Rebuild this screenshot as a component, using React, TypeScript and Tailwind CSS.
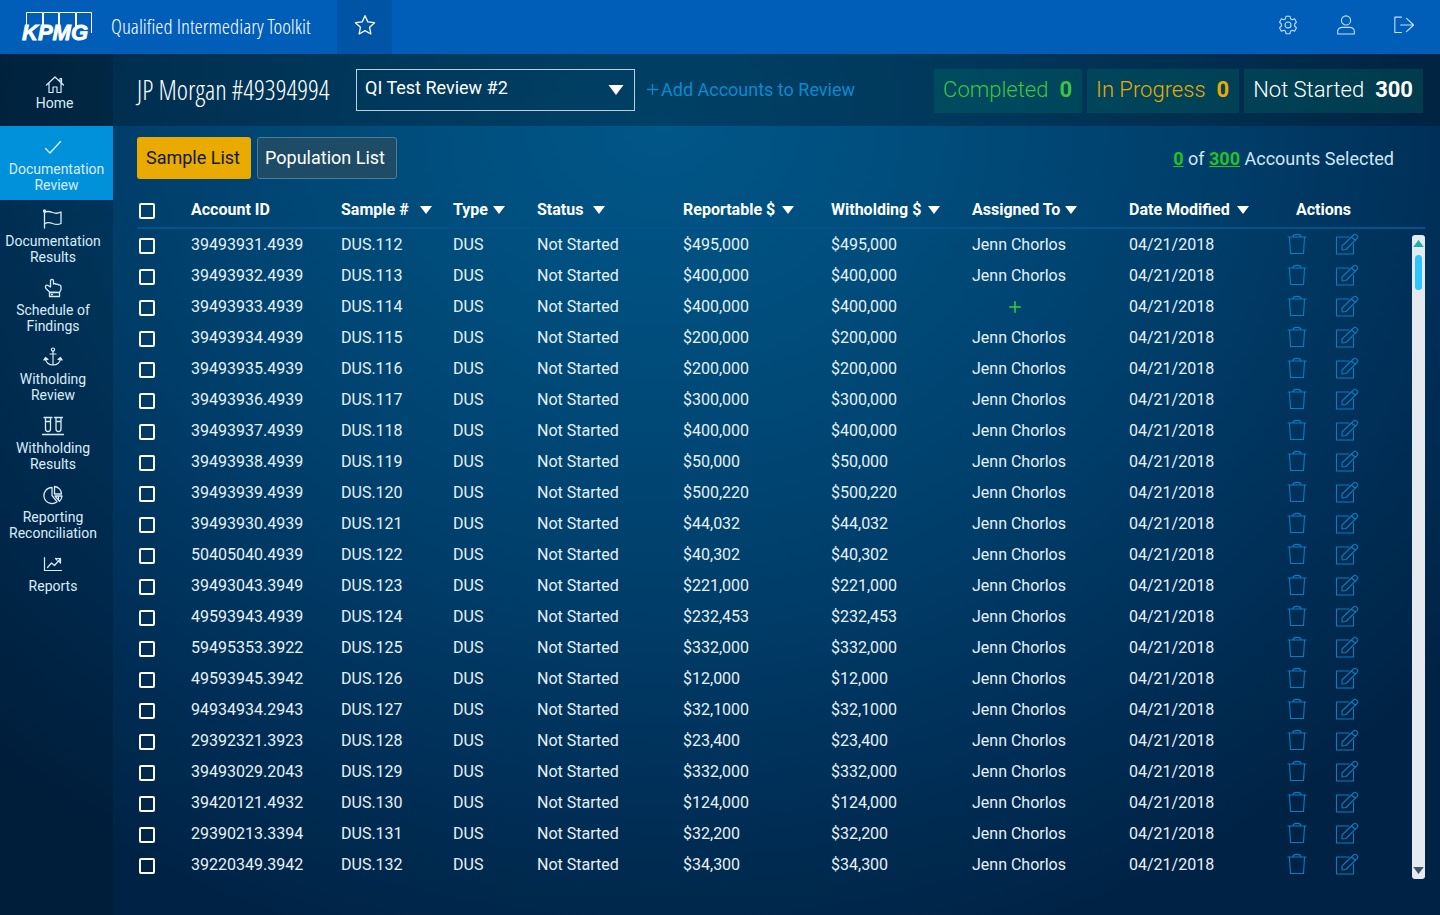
import React from "react";
import { FiPlus } from "react-icons/fi";

const stroke = { fill: "none", stroke: "currentColor", strokeLinecap: "round", strokeLinejoin: "round" } as const;

type IconProps = { className?: string };

const HomeIcon = ({ className }: IconProps) => (
  <svg viewBox="0 0 20 20" className={className} {...stroke} strokeWidth={1.2}>
    <path d="M1.500 11 10 3l8.500 8M15 7.500V4.500h1.500V9M4 9v9.500h4V13h4v5.500h4V9" />
  </svg>
);
const CheckIcon = ({ className }: IconProps) => (
  <svg viewBox="0 0 20 20" className={className} {...stroke} strokeWidth={1.4}>
    <path d="m2.500 11.500 4.500 4.500L17.500 4.500" />
  </svg>
);
const FlagIcon = ({ className }: IconProps) => (
  <svg viewBox="0 0 20 20" className={className} {...stroke} strokeWidth={1.3}>
    <circle cx="1.500" cy="2" r="1" />
    <path d="M1.500 3v16M1.500 3.500c3-2 5.500-1 8 0s5.500 1 8.500-.5v11.500c-3 1.500-6 1-8.500 0s-5-1.500-8 .5" />
  </svg>
);
const HandIcon = ({ className }: IconProps) => (
  <svg viewBox="0 0 20 20" className={className} {...stroke} strokeWidth={1.3}>
    <path d="M6.500 14 3 10.500C1.500 8.500 3 6.500 5 7.500l2.500 1.500V3c0-2.200 3-2.200 3 0v3c.8-.6 2.200-.5 2.600.4.900-.5 2-.2 2.400.6 1.400-.3 2.500.5 2.500 1.800v2.700L16.500 14.500zM6.500 14.500h10V18.500h-10zM8.500 16.500h1" />
  </svg>
);
const AnchorIcon = ({ className }: IconProps) => (
  <svg viewBox="0 0 20 20" className={className} {...stroke} strokeWidth={1.2}>
    <circle cx="10" cy="2.600" r="1.600" />
    <path d="M10 4.200V18M7 7h6M2.500 11.500c0 4 3.500 6.500 7.500 6.500s7.500-2.500 7.500-6.500" />
    <path d="M.8 13 2.500 10.500 5 12.500zM19.200 13 17.500 10.500 15 12.500z" fill="currentColor" />
  </svg>
);
const TubesIcon = ({ className }: IconProps) => (
  <svg viewBox="0 0 24 20" className={className} {...stroke} strokeWidth={1.3}>
    <path d="M3 1.500h8M4.500 1.500V13a2.500 2.500 0 0 0 5 0V1.500M4.500 5.500h5M13.500 1.500h8M15 1.500V13a2.500 2.500 0 0 0 5 0V1.500M15 5.500h5M1.500 18.500h21" />
  </svg>
);
const PieIcon = ({ className }: IconProps) => (
  <svg viewBox="0 0 20 20" className={className} {...stroke} strokeWidth={1.3}>
    <path d="M9 2.500a8 8 0 1 0 5 14.200L9 10.500zM11.500 1.500v7.500h7A7.500 7.500 0 0 0 11.500 1.500zM12 11h7a8 8 0 0 1-2.500 5.200zM15.500 11v3.500" />
  </svg>
);
const ChartIcon = ({ className }: IconProps) => (
  <svg viewBox="0 0 20 20" className={className} {...stroke} strokeWidth={1.2}>
    <path d="M1.500 3.500v13h17M4.500 13.500 8.500 9l3 2.500 3.500-4M12.500 4.500h5v4.500M12.500 4.500l1.500 1.500M17.500 9 16 7.500M15 7.500 17.500 4.500" />
  </svg>
);
const StarIcon = ({ className }: IconProps) => (
  <svg viewBox="0 0 24 24" className={className} {...stroke} strokeWidth={1.4}>
    <path d="m12 1.800 3.100 6.800 7.300.9-5.400 5 1.400 7.300L12 18.200l-6.400 3.600L7 14.500l-5.400-5 7.300-.9z" />
  </svg>
);
const GearIcon = ({ className }: IconProps) => (
  <svg viewBox="0 0 24 24" className={className} {...stroke} strokeWidth={1.3}>
    <circle cx="12" cy="12" r="3.600" />
    <path d="M9.600 1.500h4.800l.6 3 2 1.100 2.900-1 2.300 4-2.200 2.200v2.400l2.200 2.200-2.300 4-2.900-1-2 1.100-.6 3H9.600l-.6-3-2-1.100-2.900 1-2.300-4L4 13.200v-2.400L1.800 8.600l2.300-4 2.900 1 2-1.100z" />
  </svg>
);
const UserIcon = ({ className }: IconProps) => (
  <svg viewBox="0 0 24 24" className={className} {...stroke} strokeWidth={1.3}>
    <circle cx="12" cy="6.500" r="5.500" />
    <path d="M2 22.800v-3c0-3 2.500-5 5.500-5h9c3 0 5.500 2 5.500 5v3z" />
  </svg>
);
const ExitIcon = ({ className }: IconProps) => (
  <svg viewBox="0 0 24 24" className={className} {...stroke} strokeWidth={1.3}>
    <path d="M9 2.500H1v18.500H9M8 12H23.500M15 4l8.500 8-8.500 8" />
  </svg>
);
const TrashIcon = ({ className }: IconProps) => (
  <svg viewBox="0 0 20 22" className={className} {...stroke} strokeWidth={1.1}>
    <path d="M1 4h18M6 4c0-3.500 8-3.500 8 0M2.500 4.500l1 16h13l1-16" />
  </svg>
);
const EditIcon = ({ className }: IconProps) => (
  <svg viewBox="0 0 24 22" className={className} {...stroke} strokeWidth={1.1}>
    <path d="M14 4H1.500v17H18.500V11M7 17v-4L18.500 2c1-1 2-1 2.800-.2l1 1c.8.800.7 1.700-.2 2.600L11 16.500zM16.500 4l4 3.500" />
  </svg>
);
const Caret = ({ className }: IconProps) => (
  <svg viewBox="0 0 12 8" className={className} fill="currentColor">
    <path d="M0 0h12L6 8z" />
  </svg>
);

const Logo = () => (
  <svg viewBox="0 0 72 38" className="h-[38px] w-[72px] overflow-visible" role="img" aria-label="KPMG">
    <path d="M5.500 21V4.500h16V21M22.500 21V4.500h15V21M38.500 21V4.500h16V21M55.500 21V4.500h15V25" fill="none" stroke="#fff" />
    <text x="1" y="32" fill="#fff" fontFamily="Liberation Sans, sans-serif" fontSize="22" fontWeight="700" fontStyle="italic" stroke="#fff" strokeWidth=".8">
      KPMG
    </text>
  </svg>
);

const navItems = [
  { label: "Documentation Results", Icon: FlagIcon },
  { label: "Schedule of Findings", Icon: HandIcon },
  { label: "Witholding Review", Icon: AnchorIcon },
  { label: "Withholding Results", Icon: TubesIcon },
  { label: "Reporting Reconciliation", Icon: PieIcon },
  { label: "Reports", Icon: ChartIcon },
];

const columns = [
  { label: "Sample #", gap: "gap-[11px]" },
  { label: "Type", gap: "gap-[5px]" },
  { label: "Status", gap: "gap-[10px]" },
  { label: "Reportable $", gap: "gap-[7px]" },
  { label: "Witholding $", gap: "gap-[7px]" },
  { label: "Assigned To", gap: "gap-[5px]" },
  { label: "Date Modified", gap: "gap-[7px]" },
];

const rows: [string, string][] = [
  ["39493931.4939", "$495,000"],
  ["39493932.4939", "$400,000"],
  ["39493933.4939", "$400,000"],
  ["39493934.4939", "$200,000"],
  ["39493935.4939", "$200,000"],
  ["39493936.4939", "$300,000"],
  ["39493937.4939", "$400,000"],
  ["39493938.4939", "$50,000"],
  ["39493939.4939", "$500,220"],
  ["39493930.4939", "$44,032"],
  ["50405040.4939", "$40,302"],
  ["39493043.3949", "$221,000"],
  ["49593943.4939", "$232,453"],
  ["59495353.3922", "$332,000"],
  ["49593945.3942", "$12,000"],
  ["94934934.2943", "$32,1000"],
  ["29392321.3923", "$23,400"],
  ["39493029.2043", "$332,000"],
  ["39420121.4932", "$124,000"],
  ["29390213.3394", "$32,200"],
  ["39220349.3942", "$34,300"],
];

const checkboxClass =
  "ml-[2px] mt-[3px] block size-4 appearance-none rounded-xs border-2 border-white bg-transparent checked:bg-[#0091da]";

const titleFont =
  "font-['Open_Sans_Condensed_Light','Roboto_Condensed_Light','Roboto_Condensed','Liberation_Sans_Narrow',sans-serif]";

function TopBar() {
  return (
    <header className="flex h-[54px] items-stretch bg-[#005eb8] text-white">
      <div className="flex items-center pl-[21px]">
        <Logo />
        <span className={`${titleFont} ml-[18px] w-[226px] whitespace-nowrap text-[21px] font-light`}>
          Qualified Intermediary Toolkit
        </span>
      </div>
      <button aria-label="Favorite" className="flex w-[55px] items-center justify-center bg-[#0054a6] pb-1">
        <StarIcon className="size-[22px]" />
      </button>
      <div className="ml-auto flex items-center gap-[38px] pr-[26px] pb-[5px] text-[#c3e2fa]">
        <button aria-label="Settings"><GearIcon className="size-5" /></button>
        <button aria-label="Profile"><UserIcon className="size-5" /></button>
        <button aria-label="Sign out"><ExitIcon className="size-5" /></button>
      </div>
    </header>
  );
}

function Sidebar() {
  return (
    <nav className="w-[113px] shrink-0 bg-black/15 text-center text-[14px] leading-4 text-[#d9ecfa]">
      <a href="#home" className="flex h-[72px] flex-col items-center bg-black/25 pt-5 pr-1">
        <HomeIcon className="size-5" />
        <span className="mt-[1px]">Home</span>
      </a>
      <a href="#documentation-review" className="flex h-[74px] flex-col items-center bg-[#0091da] pt-[11px]">
        <CheckIcon className="mr-2 size-5" />
        <span className="mt-1">Documentation<br />Review</span>
      </a>
      {navItems.map(({ label, Icon }) => (
        <a key={label} href={`#${label}`} className="flex min-h-[69px] flex-col items-center pt-[9px] pr-[7px]">
          <Icon className="h-5 w-6" />
          <span className="mt-1 w-[100px]">{label}</span>
        </a>
      ))}
    </nav>
  );
}

function StatusBox({ label, count, className }: { label: string; count: number; className: string }) {
  return (
    <div className={`flex h-11 items-center gap-[11px] whitespace-nowrap bg-[#00806e]/25 pr-[10px] pb-[3px] pl-[9px] text-[22px] ${className}`}>
      <span className="font-light">{label}</span>
      <span className="font-bold">{count}</span>
    </div>
  );
}

function ReviewBar() {
  return (
    <div className="flex h-[72px] items-start bg-black/25 pt-[15px] pr-[17px] pl-6">
      <h1 className={`${titleFont} w-[219px] whitespace-nowrap text-[27px] leading-[42px] font-light text-white`}>
        JP Morgan #49394994
      </h1>
      <div className="relative h-[42px] w-[279px]">
        <select
          aria-label="Review"
          defaultValue="2"
          className="h-full w-full appearance-none border border-[#b8d0de] bg-transparent pb-[5px] pl-2 text-[18px] text-white"
        >
          <option value="2">QI Test Review #2</option>
        </select>
        <Caret className="pointer-events-none absolute top-[16px] right-[11px] h-[10px] w-4 text-white" />
      </div>
      <a href="#add" className="ml-[9px] flex h-10 items-center whitespace-nowrap text-[18px] text-[#0a8ad0]">
        <FiPlus className="size-[17px]" strokeWidth={1.8} />
        Add Accounts to Review
      </a>
      <div className="ml-auto flex gap-[5px]">
        <StatusBox label="Completed" count={0} className="text-[#3ec43e]" />
        <StatusBox label="In Progress" count={0} className="text-[#eaaa00]" />
        <StatusBox label="Not Started" count={300} className="text-white" />
      </div>
    </div>
  );
}

function AccountsTable() {
  return (
    <div className="relative mt-[13px]">
      <table className="w-full table-fixed border-collapse text-left text-[16px] leading-[31px] text-[#e6f1f8]">
        <colgroup>
          <col className="w-[54px]" />
          <col className="w-[150px]" />
          <col className="w-[112px]" />
          <col className="w-[84px]" />
          <col className="w-[146px]" />
          <col className="w-[148px]" />
          <col className="w-[141px]" />
          <col className="w-[157px]" />
          <col className="w-[158px]" />
          <col className="w-[138px]" />
        </colgroup>
        <thead>
          <tr className="h-9 border-b-2 border-[#05528a] text-white">
            <th className="p-0"><input type="checkbox" aria-label="Select all" className={checkboxClass} /></th>
            <th className="p-0 font-bold">Account ID</th>
            {columns.map(({ label, gap }) => (
              <th key={label} className="p-0">
                <button className={`flex items-center whitespace-nowrap font-bold ${gap}`}>
                  {label}
                  <Caret className="h-2 w-3" />
                </button>
              </th>
            ))}
            <th className="p-0 pl-[9px] font-bold">Actions</th>
          </tr>
        </thead>
        <tbody>
          {rows.map(([account, amount], i) => (
            <tr key={account} className="h-[31px]">
              <td className="p-0"><input type="checkbox" aria-label={`Select ${account}`} className={checkboxClass} /></td>
              <td className="p-0">{account}</td>
              <td className="p-0">DUS.{112 + i}</td>
              <td className="p-0">DUS</td>
              <td className="p-0">Not Started</td>
              <td className="p-0">{amount}</td>
              <td className="p-0">{amount}</td>
              <td className="p-0">
                {i === 2 ? (
                  <button aria-label="Assign" className="flex w-[86px] justify-center text-[#35d03a]">
                    <FiPlus className="size-[18px]" />
                  </button>
                ) : (
                  "Jenn Chorlos"
                )}
              </td>
              <td className="p-0">04/21/2018</td>
              <td className="p-0">
                <div className="flex items-center gap-[28px] pb-[2px] text-[#0a7cc0]">
                  <button aria-label="Delete"><TrashIcon className="h-[22px] w-5" /></button>
                  <button aria-label="Edit"><EditIcon className="h-[22px] w-6" /></button>
                </div>
              </td>
            </tr>
          ))}
        </tbody>
      </table>
      <div className="absolute top-[43px] right-0 bottom-[1px] flex w-[13px] flex-col items-center rounded-[3px] bg-[#e5eaee] py-[5px]">
        <Caret className="h-[7px] w-[11px] rotate-180 text-[#12b5a6]" />
        <div className="mt-2 h-[35px] w-[7px] rounded-full bg-[#2cc5ff]" />
        <Caret className="mt-auto h-[7px] w-[11px] text-[#3c5468]" />
      </div>
    </div>
  );
}

export default function App() {
  return (
    <div className="flex min-h-screen flex-col font-[Roboto,sans-serif]">
      <TopBar />
      <div className="flex flex-1 bg-[radial-gradient(ellipse_70%_100%_at_46%_8%,#005788_0%,#004d7c_25%,#003e6a_55%,#002e56_80%,#002345_100%)]">
        <Sidebar />
        <main className="min-w-0 flex-1">
          <ReviewBar />
          <div className="pt-[11px] pr-[15px] pb-[34px] pl-6">
            <div className="flex items-center gap-[6px] text-[18px]">
              <button className="h-[42px] w-[114px] rounded-[3px] bg-[#eaaa00] pr-[2px] pb-[2px] text-[#0d1b2a]">Sample List</button>
              <button className="h-[42px] w-[140px] rounded-[3px] border border-[#4f7d95] bg-[#1e4c66] pr-1 pb-[2px] text-white">
                Population List
              </button>
              <p className="mr-[31px] ml-auto text-[#cfe6f5]">
                <a href="#selected" className="font-bold text-[#22c322] underline">0</a> of{" "}
                <a href="#all" className="font-bold text-[#22c322] underline">300</a> Accounts Selected
              </p>
            </div>
            <AccountsTable />
          </div>
        </main>
      </div>
    </div>
  );
}
